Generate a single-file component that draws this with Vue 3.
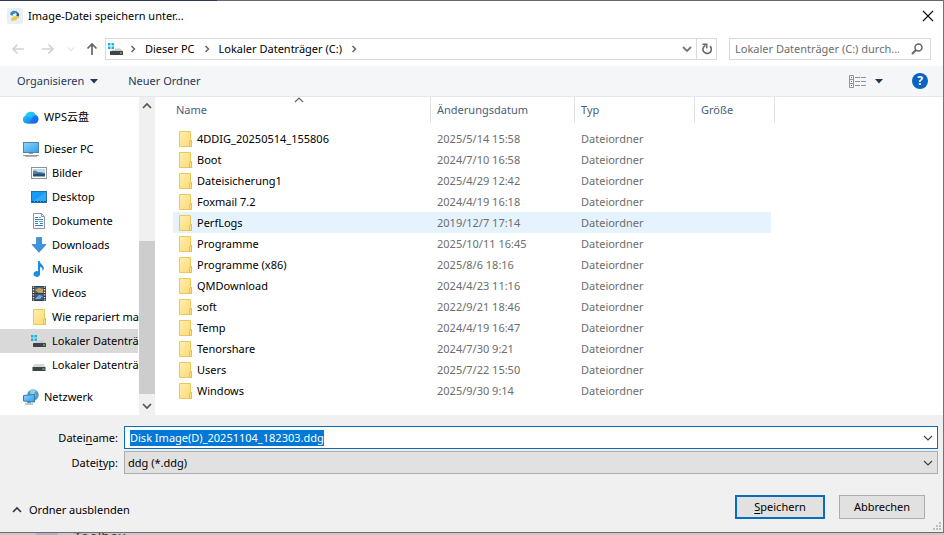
<script setup>
import { onMounted, ref } from 'vue'

const filename = ref('Disk Image(D)_20251104_182303.ddg')
const filetype = ref('ddg')
const nameInput = ref(null)

const sidebar = [
  { label: 'WPS云盘', icon: 'cloud', root: true },
  { label: 'Dieser PC', icon: 'pc', root: true, gap: true },
  { label: 'Bilder', icon: 'pictures' },
  { label: 'Desktop', icon: 'desktop' },
  { label: 'Dokumente', icon: 'document' },
  { label: 'Downloads', icon: 'download' },
  { label: 'Musik', icon: 'music' },
  { label: 'Videos', icon: 'video' },
  { label: 'Wie repariert ma', icon: 'folder' },
  { label: 'Lokaler Datenträ', icon: 'sysdrive', selected: true },
  { label: 'Lokaler Datenträ', icon: 'drive' },
  { label: 'Netzwerk', icon: 'network', root: true, gap: true }
]

const files = [
  ['4DDIG_20250514_155806', '2025/5/14 15:58'],
  ['Boot', '2024/7/10 16:58'],
  ['Dateisicherung1', '2025/4/29 12:42'],
  ['Foxmail 7.2', '2024/4/19 16:18'],
  ['PerfLogs', '2019/12/7 17:14'],
  ['Programme', '2025/10/11 16:45'],
  ['Programme (x86)', '2025/8/6 18:16'],
  ['QMDownload', '2024/4/23 11:16'],
  ['soft', '2022/9/21 18:46'],
  ['Temp', '2024/4/19 16:47'],
  ['Tenorshare', '2024/7/30 9:21'],
  ['Users', '2025/7/22 15:50'],
  ['Windows', '2025/9/30 9:14']
]
const hovered = 'PerfLogs'

onMounted(() => {
  nameInput.value.focus()
  nameInput.value.select()
})
</script>

<template>
  <div class="screen">
    <svg class="defs" width="0" height="0" aria-hidden="true">
      <defs>
        <linearGradient id="g-folder" x1="0" y1="0" x2="1" y2="1">
          <stop offset="0" stop-color="#ffefae" /><stop offset="1" stop-color="#fbd977" />
        </linearGradient>
        <linearGradient id="g-screen" x1="0" y1="0" x2="1" y2="1">
          <stop offset="0" stop-color="#8fd6fb" /><stop offset="1" stop-color="#2f9ceb" />
        </linearGradient>
        <linearGradient id="g-cloud" x1="0" y1="0" x2="1" y2="1">
          <stop offset="0" stop-color="#24dcf0" /><stop offset="0.5" stop-color="#1f9cf5" /><stop offset="1" stop-color="#1760f0" />
        </linearGradient>
        <symbol id="i-folder" viewBox="0 0 16 16">
          <path d="M2.500.5h11v9h1v6h-12z" fill="url(#g-folder)" stroke="#ecc85c" />
          <path d="M12.500 15.500v-5l2-1v6z" fill="#fbe08a" stroke="#e3b945" stroke-width=".8" />
        </symbol>
        <symbol id="i-cloud" viewBox="0 0 16 16">
          <path d="M4 14.500A4 4 0 0 1 2.400 6.800a5.600 5.600 0 0 1 10.400-.9A4.600 4.600 0 0 1 12 14.500z" fill="url(#g-cloud)" />
          <path d="M3.500 14.500c4.500 0 5-6.500 9.300-8.600A4.600 4.600 0 0 1 12 14.500z" fill="#1769f2" opacity=".75" />
          <path d="M2.400 6.800a5.600 5.600 0 0 1 10.400-.9c-3 .6-4.200 2.600-5.400 4C6.200 8 4.800 7 2.400 6.800z" fill="#22d3ee" opacity=".55" />
        </symbol>
        <symbol id="i-pc" viewBox="0 0 16 16">
          <rect x=".5" y="1.500" width="15" height="10" fill="url(#g-screen)" stroke="#4b86a8" />
          <path d="M6 12.500h4M0 14.500h16" stroke="#8b9aa4" />
          <path d="M2 15.500h12" stroke="#cfa8a4" />
        </symbol>
        <symbol id="i-pictures" viewBox="0 0 16 16">
          <rect x=".5" y="2.500" width="15" height="11" fill="#fff" stroke="#929292" />
          <rect x="2" y="4" width="12" height="8" fill="#b7dcf3" />
          <path d="M2 6c3-2 4 2 7 1l5 1v2H2z" fill="#587f9f" />
          <path d="M2 9.500l5-1 7 .5v3H2z" fill="#244e73" /><path d="M2 11h12v1H2z" fill="#8ab2a0" />
        </symbol>
        <symbol id="i-desktop" viewBox="0 0 16 16">
          <rect x=".5" y="2.500" width="15" height="11" fill="#169bf5" stroke="#2c6d9e" />
          <path d="M1 13L15 3v10z" fill="#3eb1fb" opacity=".7" />
          <path d="M1 12.500h14" stroke="#155585" stroke-dasharray="2 1" />
        </symbol>
        <symbol id="i-document" viewBox="0 0 16 16">
          <path d="M2.500.5h8l3 3v12h-11z" fill="#fff" stroke="#929292" />
          <path d="M10.500.5v3h3" fill="none" stroke="#929292" />
          <path d="M4 4.500h3M4 6.500h8M4 8.500h3M4 10.500h3M9 10.500h3M4 12.500h8" stroke="#2f83b9" />
          <path d="M8 4h2v1H8zM8 8h4v1H8z" fill="#55a9d8" />
        </symbol>
        <symbol id="i-download" viewBox="0 0 16 16">
          <path d="M5.500.5h5v7h4.500L8 15.300 1 7.500h4.500z" fill="#3a94e0" stroke="#2c7dc3" stroke-width=".7" />
        </symbol>
        <symbol id="i-music" viewBox="0 0 16 16">
          <path d="M7 0h1.600c.2 3 4.600 4.200 4.200 7.600-.1 1.200-.6 2-1.300 2.700.5-2.800-.8-3.900-2.500-4.500v6.700A3.300 2.900 0 1 1 7 10.300z" fill="#1690e4" />
        </symbol>
        <symbol id="i-video" viewBox="0 0 16 16">
          <rect x="1" y="1" width="14" height="15" fill="#3a3a42" />
          <path d="M2.500 1.500v14M13.500 1.500v14" stroke="#e8e8e8" stroke-width="1.500" stroke-dasharray="1.300 1.300" />
          <rect x="4" y="2" width="8" height="6" fill="#3a6b9b" /><rect x="4" y="9" width="8" height="6" fill="#375b91" />
          <path d="M4 5l4-2 4 1v4H8z" fill="#d3a04b" /><path d="M4 14l4-4 4 1-3 3z" fill="#76a9d4" />
        </symbol>
        <symbol id="i-drive" viewBox="0 0 16 16">
          <path d="M3.500 7h9L15 10.500H1z" fill="#d5d8da" />
          <rect x="1.500" y="10" width="13" height="4" rx=".6" fill="#3d4347" />
          <rect x="11.500" y="11.500" width="2" height="1" fill="#79ef7d" />
        </symbol>
        <symbol id="i-sysdrive" viewBox="0 0 16 16">
          <path d="M0 2h2.500v2.500H0zM3.500 2H6v2.500H3.500zM0 5.500h2.500V8H0zM3.500 5.500H6V8H3.500z" fill="#18b2e5" />
          <path d="M7 7.500h5.500L15 10.500H2.500L4.500 9H7z" fill="#cacdce" />
          <rect x="2" y="10" width="13" height="4" rx=".6" fill="#3d4347" />
          <rect x="12" y="11.500" width="2" height="1" fill="#79ef7d" />
        </symbol>
        <symbol id="i-network" viewBox="0 0 16 16">
          <circle cx="10" cy="6" r="5.800" fill="#549cc9" />
          <path d="M7 2c2-2 5-1 6 0l-2 2 2 2-2 4-3-2z" fill="#a5d9ed" opacity=".8" />
          <path d="M.5 6.500l11-1v7.500l-11-1z" fill="url(#g-screen)" stroke="#347ba8" />
          <path d="M4 13.500h4M2 15h8" stroke="#7394a7" />
        </symbol>
        <symbol id="i-chev-down" viewBox="0 0 10 10">
          <path d="M1 3l4 4 4-4" fill="none" stroke="currentColor" stroke-width="1.200" />
        </symbol>
        <symbol id="i-chev-right" viewBox="0 0 10 10">
          <path d="M3.500 2l3 3-3 3" fill="none" stroke="currentColor" stroke-width="1.500" />
        </symbol>
        <symbol id="i-chev-up" viewBox="0 0 10 10">
          <path d="M1 7l4-4 4 4" fill="none" stroke="currentColor" stroke-width="1.200" />
        </symbol>
        <symbol id="i-triangle" viewBox="0 0 10 10"><path d="M1 3h8L5 7.500z" fill="currentColor" /></symbol>
        <symbol id="i-arrow" viewBox="0 0 14 14">
          <path d="M13 7H2M6.500 2.500L2 7l4.500 4.500" fill="none" stroke="currentColor" stroke-width="1.700" />
        </symbol>
      </defs>
    </svg>

    <main class="dialog">
      <header class="titlebar">
        <svg class="app-icon" width="16" height="16" viewBox="0 0 16 16">
          <rect width="16" height="16" rx="2" fill="#e9eff5" />
          <path d="M3 6.500A4.500 4.500 0 0 1 10 3.500l-2 2A2.500 2.500 0 0 0 5.500 8z" fill="#2c8cc7" />
          <path d="M9.500 3.500c3 1.500 3.500 4.500 1.500 6.500L8.500 8.500C10 7.500 10 6 9 5z" fill="#27617f" />
          <path d="M4 10.500c2-2.200 4-2.800 8-2.500-1 3.500-4.500 5.500-8 4.500z" fill="#edc94c" />
        </svg>
        <h1>Image-Datei speichern unter...</h1>
        <button class="plain close" aria-label="Schließen">
          <svg width="12" height="12" viewBox="0 0 12 12"><path d="M1 1l10 10M11 1L1 11" stroke="#111" stroke-width="1.200" /></svg>
        </button>
      </header>

      <nav class="navbar">
        <div class="history">
          <button class="plain faded" aria-label="Zurück"><svg width="14" height="14"><use href="#i-arrow" /></svg></button>
          <button class="plain faded flip" aria-label="Vorwärts"><svg width="14" height="14"><use href="#i-arrow" /></svg></button>
          <button class="plain faded recent" aria-label="Verlauf"><svg width="8" height="8"><use href="#i-chev-down" /></svg></button>
          <button class="plain up" aria-label="Nach oben"><svg width="14" height="14"><use href="#i-arrow" /></svg></button>
        </div>
        <div class="address">
          <svg class="drive" width="16" height="16"><use href="#i-sysdrive" /></svg>
          <svg class="sep" width="10" height="10"><use href="#i-chev-right" /></svg>
          <a href="#pc">Dieser PC</a>
          <svg class="sep" width="10" height="10"><use href="#i-chev-right" /></svg>
          <a href="#c">Lokaler Datenträger (C:)</a>
          <svg class="sep" width="10" height="10"><use href="#i-chev-right" /></svg>
          <button class="plain drop" aria-label="Vorherige Orte">
            <svg width="10" height="10" viewBox="0 0 10 10"><path d="M1 3l4 4 4-4" fill="none" stroke="currentColor" stroke-width="1.800" /></svg>
          </button>
          <button class="plain refresh" aria-label="Aktualisieren">
            <svg width="12" height="12" viewBox="0 0 12 12">
              <path d="M9 3.200A4.200 4.200 0 1 1 4.500 2.400" fill="none" stroke="currentColor" stroke-width="1.600" />
              <path d="M1.500 1.200h4.300v4.300" fill="none" stroke="currentColor" stroke-width="1.400" />
            </svg>
          </button>
        </div>
        <div class="search">
          <input type="search" aria-label="Suchen" placeholder="Lokaler Datenträger (C:) durch..." />
          <svg width="12" height="12" viewBox="0 0 12 12">
            <circle cx="7.500" cy="4.500" r="3.500" fill="none" stroke="#666" stroke-width="1.500" />
            <path d="M5 7L1 11" stroke="#666" stroke-width="2" />
          </svg>
        </div>
      </nav>

      <div class="toolbar">
        <button class="plain organise">Organisieren <svg width="10" height="10"><use href="#i-triangle" /></svg></button>
        <button class="plain">Neuer Ordner</button>
        <span class="spacer"></span>
        <button class="plain view" aria-label="Ansicht ändern">
          <svg width="17" height="13" viewBox="0 0 17 13">
            <path d="M.5.5h4v12h-4zM.5 4.500h4M.5 8.500h4" fill="none" stroke="#8d949c" />
            <path d="M2 2.500h1M2 6.500h1M2 10.500h1" stroke="#667" />
            <path d="M6 2.500h5M12 2.500h5M6 6.500h5M12 6.500h5M6 10.500h5M12 10.500h5" stroke="#8d949c" />
          </svg>
          <svg width="10" height="10"><use href="#i-triangle" /></svg>
        </button>
        <button class="help" aria-label="Hilfe">?</button>
      </div>

      <div class="content">
        <aside class="sidebar">
          <ul>
            <li v-for="item in sidebar" :key="item.icon" :class="{ root: item.root, gap: item.gap, selected: item.selected }">
              <svg width="16" height="16"><use :href="'#i-' + item.icon" /></svg>
              <span>{{ item.label }}</span>
            </li>
          </ul>
          <div class="scrollbar">
            <button class="plain" aria-label="Nach oben scrollen"><svg width="10" height="10" viewBox="0 0 10 10"><path d="M1 7l4-4 4 4" fill="none" stroke="currentColor" stroke-width="1.600" /></svg></button>
            <div class="track"><div class="thumb"></div></div>
            <button class="plain" aria-label="Nach unten scrollen"><svg width="10" height="10" viewBox="0 0 10 10"><path d="M1 3l4 4 4-4" fill="none" stroke="currentColor" stroke-width="1.600" /></svg></button>
          </div>
        </aside>

        <section class="files">
          <table>
            <colgroup><col class="c-name" /><col class="c-date" /><col class="c-type" /><col class="c-size" /></colgroup>
            <thead>
              <tr>
                <th>Name<svg class="sort" width="10" height="10"><use href="#i-chev-up" /></svg></th>
                <th>Änderungsdatum</th>
                <th>Typ</th>
                <th>Größe</th>
              </tr>
            </thead>
            <tbody>
              <tr v-for="[name, date] in files" :key="name" :class="{ hovered: name === hovered }">
                <td><div class="name"><svg width="16" height="16"><use href="#i-folder" /></svg>{{ name }}</div></td>
                <td>{{ date }}</td>
                <td>Dateiordner</td>
                <td></td>
              </tr>
            </tbody>
          </table>
        </section>
      </div>

      <footer class="footer">
        <div class="fields">
          <label for="filename">Datei<u>n</u>ame:</label>
          <div class="field active">
            <input id="filename" ref="nameInput" v-model="filename" type="text" spellcheck="false" autocomplete="off" />
            <svg width="10" height="10"><use href="#i-chev-down" /></svg>
          </div>
          <label for="filetype">Datei<u>t</u>yp:</label>
          <div class="field grey">
            <select id="filetype" v-model="filetype"><option value="ddg">ddg (*.ddg)</option></select>
            <svg width="10" height="10"><use href="#i-chev-down" /></svg>
          </div>
        </div>
        <div class="actions">
          <button class="plain hide">
            <svg width="10" height="10" viewBox="0 0 10 10"><path d="M1 7l4-4 4 4" fill="none" stroke="#333" stroke-width="1.600" /></svg>
            Ordner ausblenden
          </button>
          <span class="spacer"></span>
          <button class="btn primary"><span><u>S</u>peichern</span></button>
          <button class="btn">Abbrechen</button>
          <svg class="grip" width="9" height="9" viewBox="0 0 9 9">
            <path d="M6 0h2v2H6zM3 3h2v2H3zM6 3h2v2H6zM0 6h2v2H0zM3 6h2v2H3zM6 6h2v2H6z" fill="#bdbdbd" />
          </svg>
        </div>
      </footer>
    </main>
    <div class="behind"><i></i><span>Toolbox</span></div>
  </div>
</template>

<style>
body {
  margin: 0;
  background: #c9c9c9;
}
</style>

<style scoped>
* {
  box-sizing: border-box;
}
.screen {
  display: flex;
  flex-direction: column;
  min-height: 100vh;
  font: 11px/16px "Noto Sans", "Noto Sans CJK SC", sans-serif;
  color: #000;
}
.defs {
  position: absolute;
}
svg {
  display: block;
  flex: none;
}
button,
input,
select {
  font: inherit;
  color: inherit;
  margin: 0;
}
.plain {
  display: flex;
  align-items: center;
  padding: 0;
  border: 0;
  background: none;
}
.spacer {
  flex: 1;
}
.dialog {
  flex: 1;
  display: flex;
  flex-direction: column;
  background: linear-gradient(90deg, #2b3650 0 23%, #68686c 23%) top / 100% 1px no-repeat #fff;
  border-right: 1px solid #737377;
  border-bottom: 1px solid #6c6c6c;
  padding-top: 1px;
}
.titlebar {
  display: flex;
  align-items: center;
  height: 30px;
  padding: 0 9px 0 7px;
  gap: 5px;
}
h1 {
  flex: 1;
  margin: 0;
  font: inherit;
}
.navbar {
  display: flex;
  align-items: center;
  height: 35px;
  padding: 0 12px 0 11px;
}
.history {
  display: flex;
  align-items: center;
  width: 94px;
  gap: 16px;
  color: #666;
}
.history .faded {
  color: #d2d2d2;
}
.history .recent {
  margin-left: -4px;
}
.history .up {
  margin-left: -6px;
}
.flip svg {
  transform: rotate(180deg);
}
.up svg {
  transform: rotate(90deg);
}
.address {
  flex: 1;
  display: flex;
  align-items: center;
  height: 22px;
  border: 1px solid #d9d9d9;
  padding-left: 2px;
}
.address a {
  color: inherit;
  text-decoration: none;
}
.drive {
  margin-right: -3px;
}
.sep {
  margin: 0 7px;
  color: #666;
}
.drop {
  margin-left: auto;
  padding-right: 4px;
  height: 20px;
  color: #777;
}
.refresh {
  width: 20px;
  height: 20px;
  justify-content: center;
  border-left: 1px solid #d9d9d9;
  color: #666;
}
.search {
  display: flex;
  align-items: center;
  width: 202px;
  height: 22px;
  margin-left: 12px;
  padding: 0 7px 0 5px;
  border: 1px solid #d9d9d9;
}
.search input {
  flex: 1;
  min-width: 0;
  padding: 0;
  border: 0;
  outline: 0;
  background: none;
}
.search input::placeholder {
  color: #6d6d6d;
  opacity: 1;
}
.toolbar {
  display: flex;
  align-items: center;
  height: 31px;
  padding: 0 15px 0 17px;
  background: #f5f6f7;
  border-bottom: 1px solid #e3e8ee;
  color: #1e395b;
}
.organise {
  gap: 5px;
  margin-right: 29px;
}
.view {
  gap: 8px;
  margin-right: 28px;
}
.help {
  width: 16px;
  height: 16px;
  padding: 0;
  border: 0;
  border-radius: 50%;
  background: #0a63c0;
  color: #fff;
  font-size: 12px;
  font-weight: 700;
  line-height: 16px;
}
.content {
  flex: 1;
  display: flex;
}
.sidebar {
  display: flex;
  width: 155px;
}
.sidebar ul {
  flex: 1;
  min-width: 0;
  margin: 0;
  padding: 8px 1px 6px 0;
  list-style: none;
}
.sidebar li {
  display: flex;
  align-items: center;
  gap: 5px;
  height: 24px;
  padding-left: 31px;
  white-space: nowrap;
}
.sidebar .root {
  padding-left: 23px;
}
.sidebar .gap {
  margin-top: 8px;
}
.sidebar .selected {
  background: #d9d9d9;
}
.scrollbar {
  display: flex;
  flex-direction: column;
  width: 16px;
  background: #f0f0f0;
  color: #505050;
}
.scrollbar button {
  justify-content: center;
  height: 18px;
}
.track {
  flex: 1;
  display: flex;
  flex-direction: column;
  justify-content: flex-end;
  padding-bottom: 3px;
}
.thumb {
  height: 55%;
  background: #cdcdcd;
}
.files {
  flex: 1;
  padding-left: 18px;
}
table {
  width: 602px;
  border-collapse: separate;
  border-spacing: 0;
  table-layout: fixed;
}
.c-name {
  width: 258px;
}
.c-date {
  width: 144px;
}
.c-type {
  width: 120px;
}
.c-size {
  width: 80px;
}
th {
  position: relative;
  height: 26px;
  padding: 0 0 0 6px;
  border-right: 1px solid #e0e4ea;
  font-weight: 400;
  text-align: left;
  color: #4c607a;
}
th:first-child {
  padding-left: 3px;
}
.sort {
  position: absolute;
  top: -2px;
  left: 47%;
  color: #666;
}
tbody::before {
  content: "";
  display: block;
  height: 5px;
}
td {
  height: 21px;
  padding: 0 0 0 6px;
  color: #6d6d6d;
  white-space: nowrap;
}
td:first-child {
  color: #000;
}
td:last-child {
  border-right: 4px solid transparent;
  background-clip: padding-box;
}
.hovered td {
  background-color: #e5f3ff;
}
.name {
  display: flex;
  align-items: center;
  gap: 4px;
  margin-left: -2px;
}
.footer {
  padding: 11px 5px 13px 0;
  background: #f0f0f0;
}
.fields {
  display: grid;
  grid-template-columns: 118px 1fr;
  column-gap: 6px;
  row-gap: 2px;
  align-items: center;
}
label {
  text-align: right;
}
u {
  text-underline-offset: 2px;
}
.field {
  display: flex;
  align-items: center;
  height: 23px;
  padding-right: 4px;
  border: 1px solid #0a6cbd;
  background: #fff;
  color: #444;
}
.field.grey {
  border-color: #adadad;
  background: #e1e1e1;
}
.field input,
.field select {
  flex: 1;
  min-width: 0;
  height: 16px;
  padding: 0 0 0 5px;
  border: 0;
  outline: 0;
  background: none;
  color: #000;
  appearance: none;
}
.field select {
  padding-left: 3px;
}
.field input::selection {
  background: #0078d7;
  color: #fff;
}
.actions {
  position: relative;
  display: flex;
  align-items: center;
  margin-top: 21px;
  padding: 0 13px 0 12px;
}
.hide {
  gap: 7px;
  margin-top: 6px;
}
.btn {
  width: 86px;
  height: 24px;
  margin-left: 14px;
  padding: 0;
  border: 1px solid #adadad;
  background: #e1e1e1;
}
.primary {
  width: 90px;
  border: 2px solid #0a6cbd;
}
.grip {
  position: absolute;
  right: -4px;
  bottom: -12px;
}
.behind {
  display: flex;
  gap: 16px;
  height: 2px;
  padding-left: 36px;
  overflow: hidden;
  background: #c9c9c9;
  color: #333;
  font-size: 14px;
  line-height: 7px;
}
.behind i {
  width: 22px;
  background: #a9b4c6;
}
</style>
